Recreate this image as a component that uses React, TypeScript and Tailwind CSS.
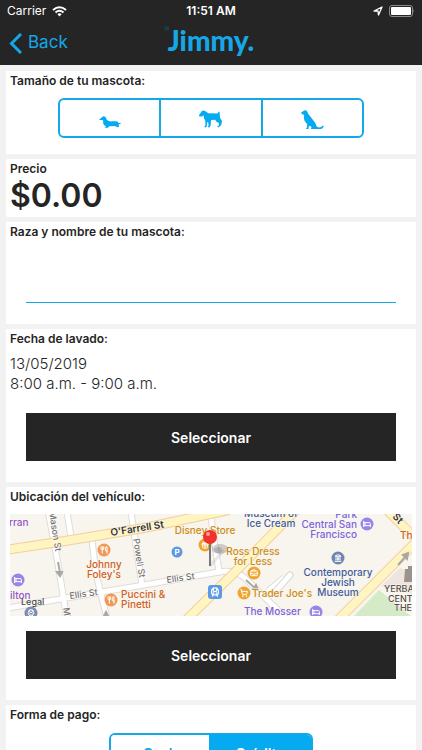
import type { ReactNode } from "react";
import { useState } from "react";
import { Bed, BriefcaseBusiness, Gift, Landmark, ShoppingCart, TrainFront, Utensils } from "lucide-react";

const PET_SIZES = [
  {
    label: "Pequeño",
    className: "mt-2 h-3 w-[22px]",
    viewBox: "0 0 64 36",
    path: "M0 9 5 7 9 2Q13-1 18 2L23 12Q29 17 38 16L50 16Q56 17 58 21L64 21 64 24 58 25 59 33 53 34 48 30 30 31 26 35 16 35 20 31Q12 28 11 20L12 14 8 12 1 12Z",
  },
  {
    label: "Mediano",
    className: "mt-0.5 h-[18px] w-[23px]",
    viewBox: "0 0 67 50",
    path: "M0 13 5 7 8 2Q14-2 20 3L27 8 54 9 57 4 60 4 61 20Q63 27 67 31L65 42 58 49 52 48 58 43 58 37Q50 34 47 27L35 28 34 44 30 50 25 48 28 44 27 35 24 34 23 46 19 50 15 48 19 43 18 28Q13 24 14 15L8 18 1 18Z",
  },
  {
    label: "Grande",
    className: "mt-0.5 h-[19px] w-[23px]",
    viewBox: "0 0 68 57",
    path: "M0 7 6 4Q11-2 17 2L21 11 34 28Q43 38 47 50 59 56 64 47L68 47Q66 58 54 57L29 57 31 52 28 48 23 49 22 57 14 57 18 51 18 43Q8 34 8 24L9 15 2 12Z",
  },
];

const PAYMENTS = ["Cash", "Crédito"];

function Card({ children, className = "" }: { children: ReactNode; className?: string }) {
  return <section className={`bg-white px-1 ${className}`}>{children}</section>;
}

function Title({ children }: { children: ReactNode }) {
  return <h2 className="text-[12px] leading-5 font-semibold">{children}</h2>;
}

function SelectButton({ label }: { label: string }) {
  return (
    <button type="button" aria-label={label} className="mx-4 h-12 bg-[#252525] text-[14px] font-semibold text-white">
      Seleccionar
    </button>
  );
}

function StatusBar() {
  return (
    <div className="grid h-[22px] grid-cols-3 items-center px-[7px] text-[12px]">
      <div className="flex items-center gap-1.5">
        <span>Carrier</span>
        <svg viewBox="0 0 15 11" className="h-[11px] w-[15px]" fill="none" stroke="currentColor" strokeWidth="2">
          <path d="M1 4Q7.500-1.500 14 4M3.500 6.500Q7.500 3 11.500 6.500" />
          <path d="M5.300 8Q7.500 6.300 9.700 8L7.500 10.500Z" fill="currentColor" stroke="none" />
        </svg>
      </div>
      <span className="text-center font-semibold whitespace-nowrap">11:51 AM</span>
      <div className="flex items-center justify-end gap-1.5">
        <svg viewBox="0 0 10 10" className="size-2.5" fill="none" stroke="currentColor" strokeWidth="1.3" strokeLinejoin="round">
          <path d="M1 5 9 1 5.500 9 5 5Z" />
        </svg>
        <svg viewBox="0 0 26 12" className="h-3 w-[26px]">
          <rect x=".5" y=".5" width="23" height="11" rx="2.500" fill="none" stroke="#8b8b8b" />
          <rect x="2" y="2" width="20" height="8" rx="1" fill="#fff" />
          <path d="M24.500 4q1.500 2 0 4z" fill="#8b8b8b" />
        </svg>
      </div>
    </div>
  );
}

function Header() {
  return (
    <header className="h-[65px] shrink-0 bg-[#252525] text-white">
      <StatusBar />
      <div className="grid h-[42px] grid-cols-3 items-center text-[#15a8e8]">
        <button type="button" className="flex items-center gap-1.5 pl-[9px] text-[17px]">
          <svg viewBox="0 0 13 21" className="h-[21px] w-[13px]" fill="none" stroke="currentColor" strokeWidth="3">
            <path d="M12 1 2.500 10.500 12 20" />
          </svg>
          Back
        </button>
        <h1 className="relative justify-self-center pb-1.5 font-['Lato',sans-serif] text-[28px] leading-none font-black">
          <svg viewBox="0 0 6 5" className="absolute top-0 -left-1 h-[5px] w-1.5" stroke="#17506c" fill="none">
            <path d="M0 1h5M1 2.500h4M0 4h5" strokeWidth=".7" />
          </svg>
          Jimmy.
        </h1>
      </div>
    </header>
  );
}

function Poi({ x, y, color, icon }: { x: number; y: number; color: string; icon: ReactNode }) {
  return (
    <g transform={`translate(${x} ${y})`} color="#fff">
      <circle r="6.500" fill={color} />
      {icon}
    </g>
  );
}

const iconBox = { x: -4, y: -4, width: 8, height: 8, strokeWidth: 3 };

function LocationMap() {
  const yellow = ["M-2 35.500 55 27 134 14 219-4", "M170 112 229 54 290-8", "M322 112 405 29", "M376-5 405 24"];
  const white = [
    "M38-4 48 50 57 106",
    "M57-2 61 23",
    "M82 26 86 60 97 104",
    "M121-2 132 71",
    "M-2 94 56 84 134 71 209 58Q226 55 236 65L276 104",
    "M200-3 209 58",
    "M258 77 274 64",
  ];

  return (
    <svg viewBox="0 0 402 102" preserveAspectRatio="xMidYMid slice" role="img" aria-label="Mapa" className="h-[102px] w-full font-['Inter',sans-serif]">
      <rect width="402" height="102" fill="#f8f4ee" />
      <path d="M344 102 369 76 403 104Z" fill="#d5eac6" />
      <path d="M371 72 390 54 402 58V80Z" fill="#eee5df" />
      <g fill="none">
        {white.map((d) => <path key={d} d={d} stroke="#deddda" strokeWidth="7" />)}
        {white.map((d) => <path key={d} d={d} stroke="#fff" strokeWidth="5" />)}
        <path d="M266 77 280 61" stroke="#d4d3d0" strokeWidth="7" strokeLinecap="round" />
        <path d="M266 77 280 61" stroke="#fff" strokeWidth="5" strokeLinecap="round" />
        {yellow.map((d) => <path key={d} d={d} stroke="#f3cf98" strokeWidth="10" />)}
        {yellow.map((d) => <path key={d} d={d} stroke="#fff5c3" strokeWidth="8" />)}
      </g>
      <g stroke="#aaa8a5" strokeWidth="2" fill="#aaa8a5">
        <path d="M48 48 50 59M47 58h5l-2 4z" />
        <path d="M236 66 246 75M246 71l2 5-5-1z" />
        <path d="M388 51 397 41M393 41l5-2-1 6z" />
        <path d="M94 102 96 98 98 102z" />
      </g>
      <path d="M395 55h3v-3h5v16h-9z" fill="#9b948e" />

      <Poi x={94} y={36} color="#f39755" icon={<Utensils {...iconBox} />} />
      <Poi x={101} y={86} color="#f39755" icon={<Utensils {...iconBox} />} />
      <Poi x={8} y={66} color="#9786e8" icon={<Bed {...iconBox} />} />
      <Poi x={357} y={10} color="#9786e8" icon={<Bed {...iconBox} />} />
      <Poi x={306} y={98} color="#9786e8" icon={<Bed {...iconBox} />} />
      <Poi x={21} y={99} color="#7d8db4" icon={<TrainFront {...iconBox} />} />
      <Poi x={328} y={44} color="#7285b2" icon={<Landmark {...iconBox} />} />
      <Poi x={244} y={59} color="#efa52e" icon={<BriefcaseBusiness {...iconBox} />} />
      <Poi x={234} y={79} color="#efa52e" icon={<ShoppingCart {...iconBox} />} />
      <Poi x={195} y={31} color="#efa52e" icon={<Gift {...iconBox} />} />
      <circle cx="167" cy="38" r="5.500" fill="#5b9ae0" />
      <rect x="198" y="71" width="14" height="14" rx="3" fill="#5b9ae6" />
      <TrainFront x={200} y={73} width={10} height={10} color="#fff" strokeWidth={3} />

      <g fontSize="9" fontWeight="500" fill="#77726d" stroke="#fff" strokeWidth="1" paintOrder="stroke">
        <text transform="translate(39 -2) rotate(81)">Mason St</text>
        <text transform="translate(53 94) rotate(81)">Mi</text>
        <text transform="translate(123 25) rotate(81)">Powell St</text>
        <text transform="translate(60 85) rotate(-8)">Ellis St</text>
        <text transform="translate(157 69) rotate(-8)">Ellis St</text>
      </g>
      <g fontSize="10" fontWeight="500" stroke="#faf7f2" strokeWidth="1" paintOrder="stroke">
        <text transform="translate(101 22) rotate(-9)" fontWeight="600" fill="#36332f">O'Farrell St</text>
        <text transform="translate(382 3) rotate(47)" fontWeight="600" fill="#36332f">St</text>
        <text x="-1" y="12" fill="#9356c4">rran</text>
        <text x="0" y="85" fill="#9356c4">ilton</text>
        <g fill="#d0601f">
          <text x="94" y="54" textAnchor="middle">Johnny</text>
          <text x="94" y="64" textAnchor="middle">Foley's</text>
          <text x="111" y="84">Puccini &amp;</text>
          <text x="111" y="94">Pinetti</text>
          <text x="390" y="25">Th</text>
        </g>
        <g fill="#cc8d14" textAnchor="middle">
          <text x="195" y="20">Disney Store</text>
          <text x="243" y="41">Ross Dress</text>
          <text x="243" y="51">for Less</text>
          <text x="272" y="83">Trader Joe's</text>
        </g>
        <g fill="#3f5c98" textAnchor="middle">
          <text x="261" y="3">Museum of</text>
          <text x="261" y="13">Ice Cream</text>
          <text x="328" y="62">Contemporary</text>
          <text x="328" y="72">Jewish</text>
          <text x="328" y="82">Museum</text>
        </g>
        <g fill="#7a63dc">
          <text x="347" y="4" textAnchor="end">Park</text>
          <text x="347" y="14" textAnchor="end">Central San</text>
          <text x="347" y="24" textAnchor="end">Francisco</text>
          <text x="234" y="101">The Mosser</text>
        </g>
        <g fontSize="9" fill="#55504b">
          <text x="374" y="78">YERBA</text>
          <text x="378" y="88">CENT</text>
          <text x="384" y="97">THE</text>
        </g>
      </g>
      <text x="167" y="41" fontSize="8" fontWeight="700" fill="#fff" textAnchor="middle">P</text>
      <text x="11" y="91" fontSize="9" fontWeight="500" fill="#4d4b4a">Legal</text>

      <path d="M200 52 214 36" stroke="#777" strokeWidth="3" opacity=".15" />
      <ellipse cx="210" cy="35" rx="8" ry="5" fill="#555" opacity=".25" />
      <ellipse cx="208" cy="36" rx="4" ry="3" fill="#555" opacity=".25" />
      <path d="M200 27V52" stroke="#77777a" strokeWidth="2" />
      <circle cx="200" cy="23" r="7" fill="#f1312b" />
      <circle cx="198" cy="20" r="2" fill="#ff9d94" />
    </svg>
  );
}

export default function App() {
  const [petSize, setPetSize] = useState<string | null>(null);
  const [payment, setPayment] = useState("Crédito");

  return (
    <div className="flex h-screen flex-col overflow-hidden bg-[#f2f2f2] font-['Inter',sans-serif] text-[#252525]">
      <Header />
      <main className="flex flex-col gap-[5px] px-1.5 pt-1.5 *:shrink-0">
        <Card className="pb-4">
          <Title>Tamaño de tu mascota:</Title>
          <div className="mx-auto mt-[7px] flex h-10 w-[306px] overflow-hidden rounded-md border-2 border-[#15a8e8] text-[#05aaf0]">
            {PET_SIZES.map((size) => (
              <button
                key={size.label}
                type="button"
                aria-label={size.label}
                aria-pressed={petSize === size.label}
                onClick={() => setPetSize(size.label)}
                className="flex flex-1 items-center justify-center border-[#15a8e8] not-last:border-r-2 aria-pressed:bg-sky-100"
              >
                <svg viewBox={size.viewBox} className={size.className} fill="currentColor">
                  <path d={size.path} />
                </svg>
              </button>
            ))}
          </div>
        </Card>

        <Card className="pb-1">
          <Title>Precio</Title>
          <p className="text-[32px] leading-[34px] font-semibold">$0.00</p>
        </Card>

        <Card className="flex flex-col pb-[21px]">
          <label htmlFor="pet" className="text-[12px] leading-5 font-semibold">Raza y nombre de tu mascota:</label>
          <input id="pet" type="text" className="mx-4 mt-5 h-[41px] border-b border-[#15a8e8] text-[16px] outline-none" />
        </Card>

        <Card className="flex flex-col pb-[21px]">
          <Title>Fecha de lavado:</Title>
          <p className="mt-[5px] mb-[19px] text-[15px] leading-5 font-light">
            13/05/2019
            <br />
            8:00 a.m. - 9:00 a.m.
          </p>
          <SelectButton label="Seleccionar fecha" />
        </Card>

        <Card className="flex flex-col pb-[21px]">
          <Title>Ubicación del vehículo:</Title>
          <div className="mt-[7px] mb-[15px]">
            <LocationMap />
          </div>
          <SelectButton label="Seleccionar ubicación" />
        </Card>

        <Card className="pb-4">
          <Title>Forma de pago:</Title>
          <div className="mx-auto mt-2 grid h-10 w-[204px] grid-cols-[98px_1fr] overflow-hidden rounded-md border-2 border-[#15a8e8] text-[14px] font-semibold">
            {PAYMENTS.map((option) => (
              <button
                key={option}
                type="button"
                aria-pressed={payment === option}
                onClick={() => setPayment(option)}
                className="bg-white text-[#05aaf0] aria-pressed:bg-[#05aaf0] aria-pressed:text-white"
              >
                {option}
              </button>
            ))}
          </div>
        </Card>
      </main>
    </div>
  );
}
